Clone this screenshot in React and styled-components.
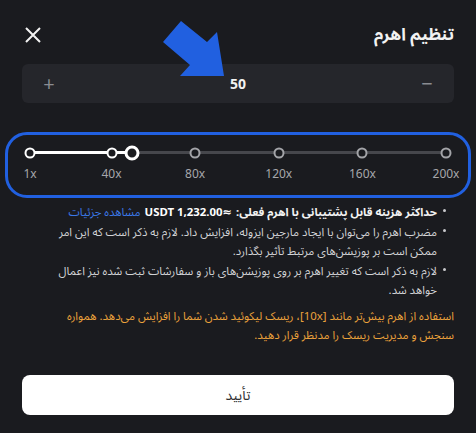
import React from "react";
import styled, { createGlobalStyle } from "styled-components";

const GlobalStyle = createGlobalStyle`
  body {
    margin: 0;
    background: #1a1b1f;
    font-family: "Noto Sans", "Noto Sans Arabic", "DejaVu Sans", sans-serif;
  }
`;

const Modal = styled.div`
  position: relative;
  width: 476px;
  height: 433px;
  box-sizing: border-box;
  padding: 0 22px;
  background: #1a1b1f;
  overflow: hidden;
`;

const Header = styled.div`
  display: flex;
  align-items: center;
  justify-content: space-between;
  height: 64px;
  padding-top: 6px;
  box-sizing: border-box;
`;

const Title = styled.h1`
  margin: 0;
  font-size: 17px;
  font-weight: 700;
  color: #f2f2f2;
  direction: rtl;
`;

const CloseButton = styled.button`
  display: flex;
  padding: 0;
  margin-left: 3px;
  background: none;
  border: none;
  cursor: pointer;
`;

const Stepper = styled.div`
  display: flex;
  align-items: center;
  justify-content: space-between;
  height: 39px;
  padding: 0 20px;
  border-radius: 6px;
  background: #25262b;
`;

const StepButton = styled.span`
  width: 14px;
  font-size: 20px;
  line-height: 1;
  color: #8a8c92;
  text-align: center;
`;

const Value = styled.span`
  font-size: 14px;
  font-weight: 700;
  color: #f2f2f2;
`;

const Arrow = styled.svg`
  position: absolute;
  left: 160px;
  top: 18px;
`;

const Ring = styled.div`
  margin: 29px -17px 0;
  height: 66px;
  box-sizing: border-box;
  border: 3px solid #2160e0;
  border-radius: 22px;
  padding: 0 22px;
`;

const Track = styled.div`
  position: relative;
  height: 3px;
  margin-top: 16px;
  background: #46474c;
`;

const Fill = styled.div`
  height: 100%;
  background: #ffffff;
`;

const Mark = styled.span`
  position: absolute;
  top: 50%;
  width: 7px;
  height: 7px;
  border-radius: 50%;
  border: 2px solid ${(p) => (p.active ? "#ffffff" : "#a3a4a8")};
  background: #1a1b1f;
  transform: translate(-50%, -50%);
`;

const Thumb = styled.span`
  position: absolute;
  top: 50%;
  width: 9px;
  height: 9px;
  border-radius: 50%;
  border: 3px solid #ffffff;
  background: #1a1b1f;
  transform: translate(-50%, -50%);
`;

const Labels = styled.div`
  position: relative;
  height: 16px;
  margin-top: 11px;
`;

const Label = styled.span`
  position: absolute;
  top: 0;
  font-size: 12px;
  color: #a6a7ab;
  transform: translateX(-50%);
  white-space: nowrap;
`;

const Notes = styled.ul`
  direction: rtl;
  list-style: none;
  margin: 4px 0 0;
  padding: 0 17px 0 12px;
  font-size: 11.4px;
  line-height: 19px;
  color: #d2d3d6;
`;

const Note = styled.li`
  position: relative;
  margin-bottom: 1px;

  &::before {
    content: "";
    position: absolute;
    right: -9px;
    top: 7px;
    width: 3px;
    height: 3px;
    border-radius: 50%;
    background: #c8c9cc;
  }
`;

const Strong = styled.span`
  font-weight: 700;
  color: #f2f2f2;
`;

const Amount = styled.span`
  direction: ltr;
  unicode-bidi: isolate;
  font-weight: 700;
  color: #ffffff;
  margin: 0 4px;
`;

const Link = styled.a`
  color: #3b78e7;
  text-decoration: none;
`;

const Warning = styled.p`
  direction: rtl;
  margin: 7px 0 0;
  padding-left: 20px;
  font-size: 11.4px;
  line-height: 19px;
  color: #eba23c;
`;

const Confirm = styled.button`
  display: block;
  width: 100%;
  height: 40px;
  margin-top: 31px;
  border: none;
  border-radius: 8px;
  background: #ffffff;
  font-family: inherit;
  font-size: 14px;
  color: #303133;
  cursor: pointer;
`;

const marks = [1, 40, 80, 120, 160, 200];
const value = 50;
const pos = (v) => ((v - 1) / 199) * 100;

export default function App() {
  return (
    <>
      <GlobalStyle />
      <Modal>
        <Header>
          <CloseButton>
            <svg width="16" height="16" viewBox="0 0 16 16">
              <path d="M1 1L15 15M15 1L1 15" stroke="#f2f2f2" strokeWidth="2" />
            </svg>
          </CloseButton>
          <Title>تنظیم اهرم</Title>
        </Header>
        <Stepper>
          <StepButton>+</StepButton>
          <Value>{value}</Value>
          <StepButton>−</StepButton>
        </Stepper>
        <Arrow width="70" height="62" viewBox="0 0 70 62">
          <polygon
            points="21,3 47,24 57,14 64,58 20,58 30,47 3,24"
            fill="#2160e0"
          />
        </Arrow>
        <Ring>
          <Track>
            <Fill style={{ width: `${pos(value)}%` }} />
            {marks.map((m) => (
              <Mark key={m} active={m <= value} style={{ left: `${pos(m)}%` }} />
            ))}
            <Thumb style={{ left: `${pos(value)}%` }} />
          </Track>
          <Labels>
            {marks.map((m) => (
              <Label key={m} style={{ left: `${pos(m)}%` }}>
                {m}x
              </Label>
            ))}
          </Labels>
        </Ring>
        <Notes>
          <Note>
            <Strong>حداکثر هزینه قابل پشتیبانی با اهرم فعلی:</Strong>
            <Amount>USDT 1,232.00≈</Amount>
            <Link href="#">مشاهده جزئیات</Link>
          </Note>
          <Note>
            مضرب اهرم را می‌توان با ایجاد مارجین ایزوله، افزایش داد. لازم به ذکر
            است که این امر ممکن است بر پوزیشن‌های مرتبط تأثیر بگذارد.
          </Note>
          <Note>
            لازم به ذکر است که تغییر اهرم بر روی پوزیشن‌های باز و سفارشات ثبت شده
            نیز اعمال خواهد شد.
          </Note>
        </Notes>
        <Warning>
          استفاده از اهرم بیش‌تر مانند [10x]، ریسک لیکوئید شدن شما را افزایش
          می‌دهد. همواره سنجش و مدیریت ریسک را مدنظر قرار دهید.
        </Warning>
        <Confirm>تأیید</Confirm>
      </Modal>
    </>
  );
}
